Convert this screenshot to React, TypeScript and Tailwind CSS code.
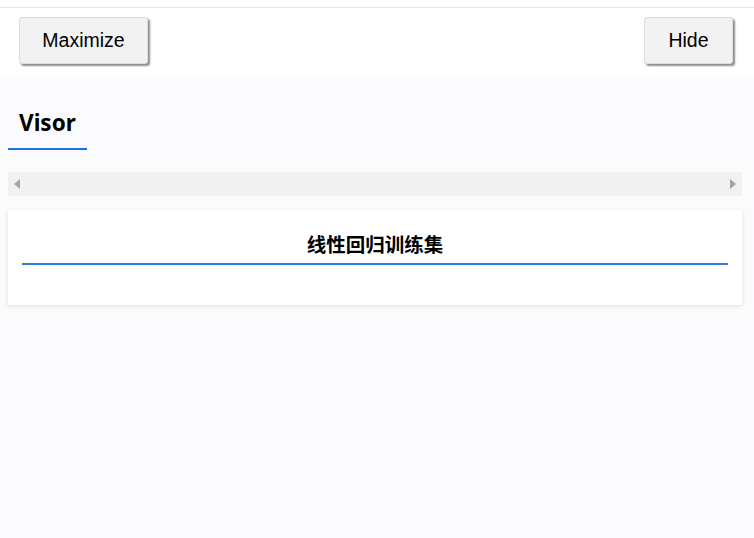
export default function App() {
  return (
    <div className="min-h-[538px] w-full bg-[#fbfbfd] font-['Liberation_Sans','Noto_Sans_CJK_SC',sans-serif] text-black">
      <div className="h-[8px] border-b border-[#e6e6e6] bg-white" />
      {/* Toolbar */}
      <div className="flex h-[68px] items-start justify-between bg-white pl-[19px] pr-[21px] pt-[9px]">
        <button className="h-[47px] w-[129px] rounded-[3px] border border-[#dcdcdc] bg-[#f3f2f2] text-[19.5px] shadow-[2px_2px_2px_rgba(0,0,0,0.45)]">
          Maximize
        </button>
        <button className="h-[47px] w-[89px] rounded-[3px] border border-[#dcdcdc] bg-[#f3f2f2] text-[19.5px] shadow-[2px_2px_2px_rgba(0,0,0,0.45)]">
          Hide
        </button>
      </div>

      <div className="px-[8px] pr-[12px]">
        {/* Tabs */}
        <div className="flex pt-[34px]">
          <div className="w-[79px] border-b-2 border-[#1a73e8] pb-[12px] pl-[11px] font-['Noto_Sans','Noto_Sans_CJK_SC',sans-serif] text-[22.5px] font-bold leading-[26px]">
            Visor
          </div>
        </div>

        {/* Horizontal scroller */}
        <div className="mt-[22px] flex h-[24px] items-center justify-between bg-[#f1f1f1] px-[6px]">
          <svg width="6" height="10" viewBox="0 0 6 10">
            <path d="M6 0 L0 5 L6 10 Z" fill="#a3a3a3" />
          </svg>
          <svg width="6" height="10" viewBox="0 0 6 10">
            <path d="M0 0 L6 5 L0 10 Z" fill="#a3a3a3" />
          </svg>
        </div>

        {/* Card */}
        <div className="mt-[14px] h-[95px] bg-white px-[14px] pt-[21px] shadow-[0_1px_4px_rgba(0,0,0,0.12)]">
          <div className="border-b-2 border-[#2f7de1] pb-[7px] text-center font-['Noto_Sans_CJK_SC',sans-serif] text-[19.5px] font-bold leading-[25px]">
            线性回归训练集
          </div>
        </div>
      </div>
    </div>
  );
}
